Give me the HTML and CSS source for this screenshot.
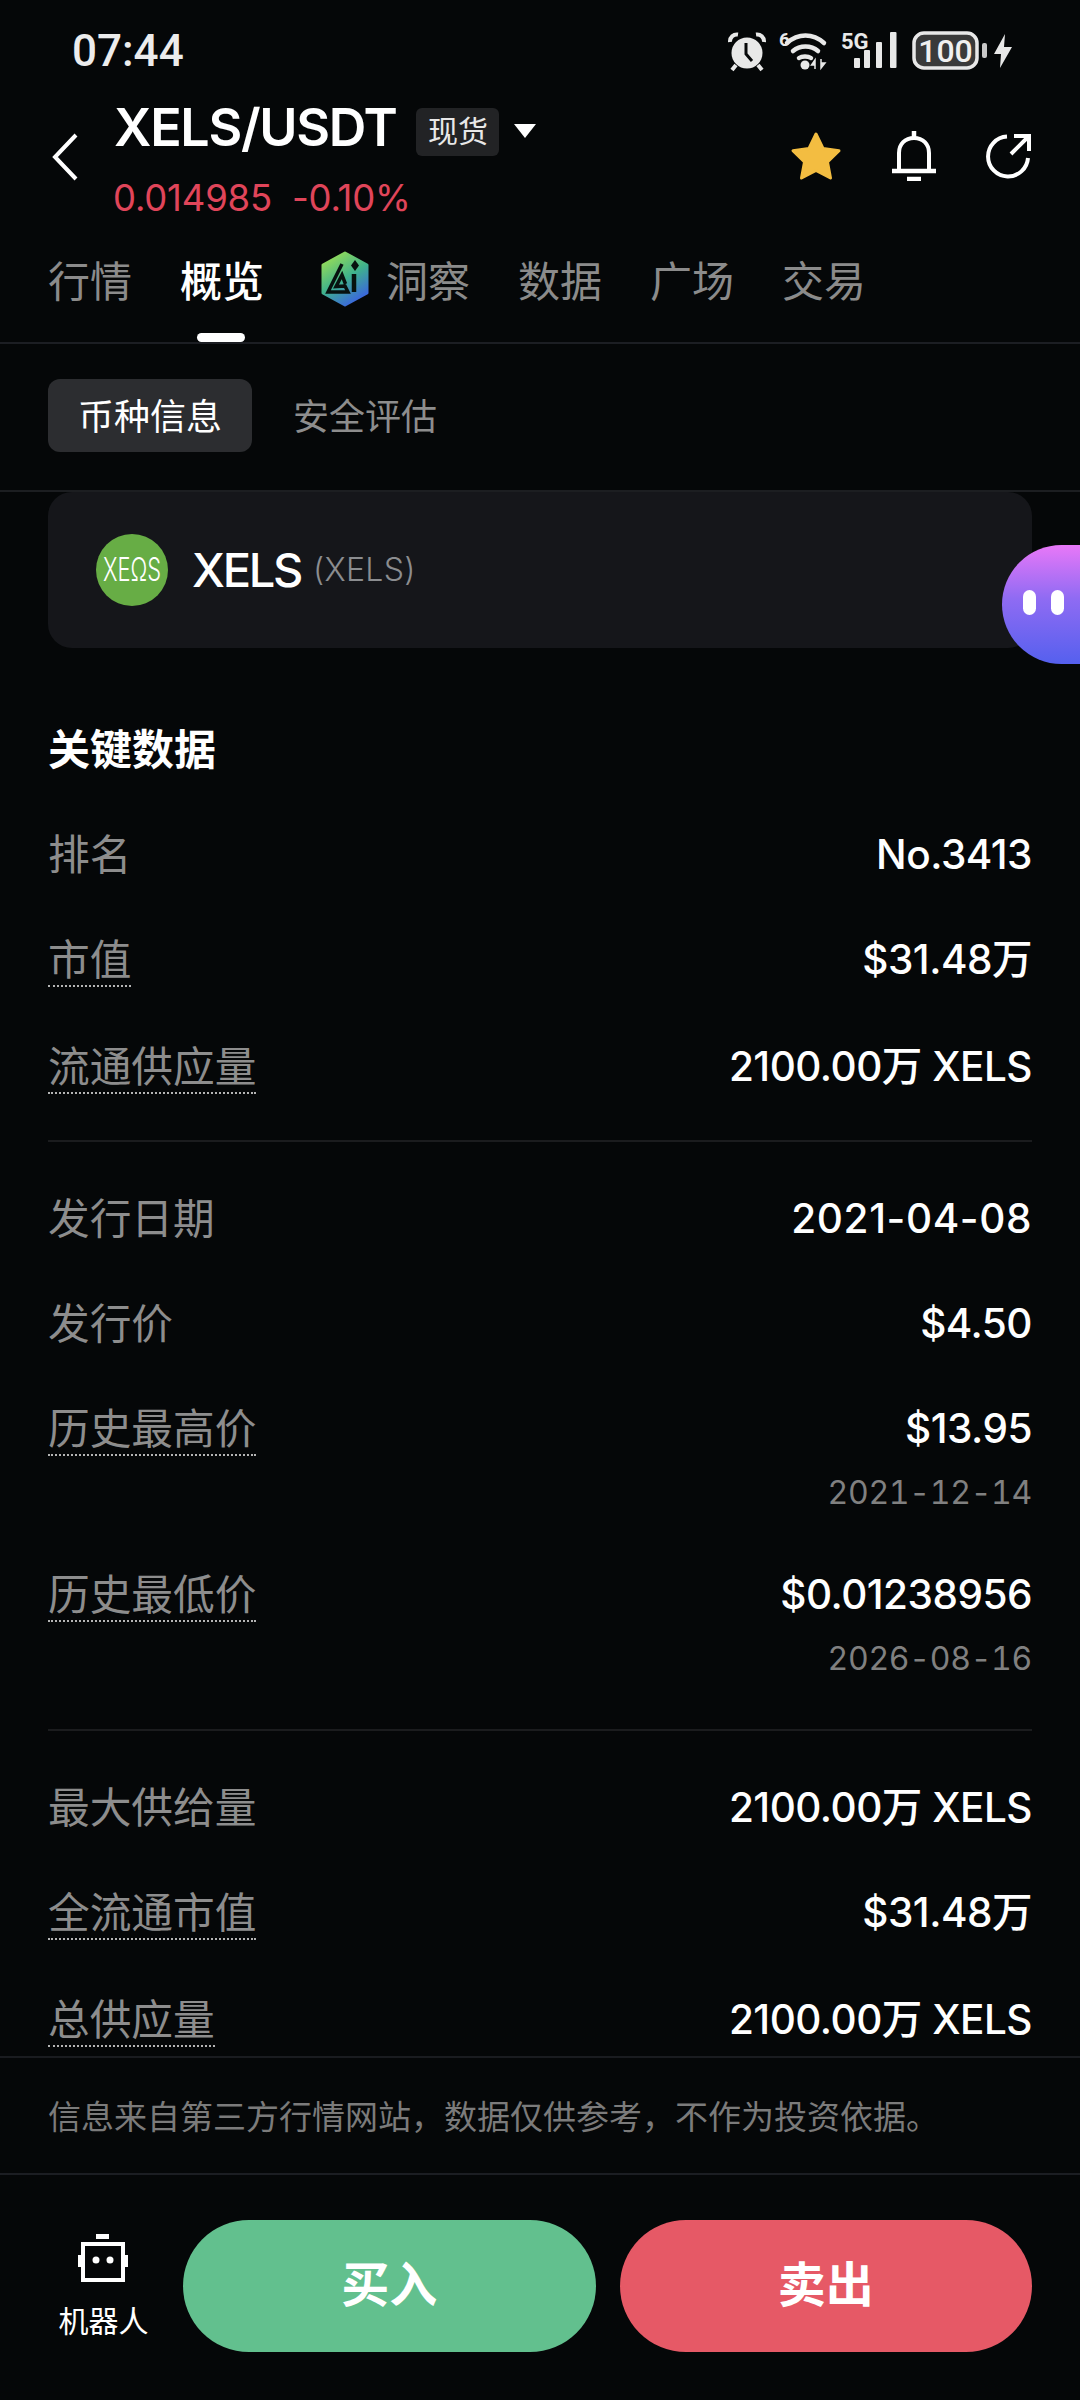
FILE: index.html
```html
<!DOCTYPE html>
<html lang="zh-CN">
<head>
<meta charset="utf-8">
<title>XELS/USDT</title>
<link rel="stylesheet" href="styles.css">
</head>
<body>
<div class="page">
  <div class="statusbar">
    <span class="clock">07:44</span>
    <div class="status-icons">
      <svg class="ic-alarm" width="38" height="40" viewBox="0 0 38 40">
        <circle cx="19" cy="21" r="15.5" fill="#e8e8e8"/>
        <path d="M2 10a7 7 0 0 1 8-7.5M36 10a7 7 0 0 0-8-7.5" fill="none" stroke="#e8e8e8" stroke-width="4"/>
        <path d="M8 33l-4 5M30 33l4 5" stroke="#e8e8e8" stroke-width="4"/>
        <path d="M18 11v11l6 7" fill="none" stroke="#07090a" stroke-width="3"/>
      </svg>
      <svg class="ic-wifi" width="52" height="42" viewBox="0 0 52 42">
        <text class="svg-six" x="2" y="16">6</text>
        <path d="M13 13c11-10 26-10 37 0M19 21c7-6 18-6 25 0M25 28c3-2 9-2 12 0" transform="translate(-3 0)" fill="none" stroke="#e8e8e8" stroke-width="4.5" stroke-linecap="round"/>
        <circle cx="28" cy="35" r="4.5" fill="#e8e8e8"/>
        <path d="M38 39V30l-3.500 5h3.500M44 29v9l4-5h-4" fill="#e8e8e8" stroke="#e8e8e8" stroke-width="1.500"/>
      </svg>
      <svg class="ic-signal" width="58" height="40" viewBox="0 0 58 40">
        <text class="svg-small" x="2" y="19">5G</text>
        <rect x="15" y="28" width="6" height="10" rx="1" fill="#e8e8e8"/>
        <rect x="25" y="20" width="6" height="18" rx="1" fill="#e8e8e8"/>
        <rect x="37" y="12" width="6" height="26" rx="1" fill="#e8e8e8"/>
        <rect x="51" y="2" width="6.500" height="36" rx="1" fill="#e8e8e8"/>
      </svg>
      <svg class="ic-battery" width="76" height="40" viewBox="0 0 76 40">
        <rect x="2" y="2" width="63" height="35" rx="10" fill="#3a3a3a" stroke="#e8e8e8" stroke-width="3.500"/>
        <text class="svg-batt" x="33.500" y="31" text-anchor="middle">100</text>
        <rect x="70" y="12" width="5" height="15" rx="2" fill="#c8c8c8"/>
      </svg>
      <svg class="ic-bolt" width="18" height="34" viewBox="0 0 18 34">
        <path d="M11 0L0 20h7l-1 14 12-21h-8z" fill="#e8e8e8"/>
      </svg>
    </div>
  </div>

  <header class="header">
    <svg class="back" width="26" height="48" viewBox="0 0 26 48">
      <path d="M24 2L3 24l21 22" fill="none" stroke="#fff" stroke-width="4"/>
    </svg>
    <div class="pair">
      <div class="pair-top">
        <span class="pair-name">XELS/USDT</span>
        <span class="badge">现货</span>
        <span class="caret"></span>
      </div>
      <div class="pair-price"><span>0.014985</span><span>-0.10%</span></div>
    </div>
    <div class="actions">
      <svg width="52" height="50" viewBox="0 0 52 50">
        <path d="M26 3l7 14.500 16 2.300-11.500 11.200L40.500 47 26 39.500 11.500 47l3-16L3 19.800l16-2.300z" fill="#f3bd41" stroke="#f3bd41" stroke-width="3" stroke-linejoin="round"/>
      </svg>
      <svg width="44" height="50" viewBox="0 0 44 50">
        <path d="M7 39V22C7 13 13 7 22 7s15 6 15 15v17" fill="none" stroke="#fff" stroke-width="4"/>
        <path d="M0 40h44M22 0v7M15 48h14" stroke="#fff" stroke-width="4.500"/>
      </svg>
      <svg width="46" height="46" viewBox="0 0 46 46">
        <path d="M21 3.500A20 20 0 1 0 42 25" fill="none" stroke="#fff" stroke-width="4"/>
        <path d="M25 21L42 4M28 3h15v15" fill="none" stroke="#fff" stroke-width="4"/>
      </svg>
    </div>
  </header>

  <nav class="tabs">
    <span class="tab">行情</span>
    <span class="tab tab-active">概览</span>
    <span class="tab tab-ai">
      <svg width="50" height="56" viewBox="0 0 50 56">
        <defs>
          <linearGradient id="aig" x1="0.2" y1="0" x2="0.75" y2="1">
            <stop offset="0" stop-color="#9adf55"/>
            <stop offset="0.5" stop-color="#3fb28c"/>
            <stop offset="1" stop-color="#3a5fe6"/>
          </linearGradient>
        </defs>
        <path d="M25 2l22 12v28L25 54 3 42V14z" fill="url(#aig)" stroke="url(#aig)" stroke-width="3" stroke-linejoin="round"/>
        <path d="M22 13L8 41h20l-3-6-9 .5L22 24l3.500 9" fill="none" stroke="#07120f" stroke-width="3.500"/>
        <path d="M34 23v18" stroke="#07120f" stroke-width="4.500"/>
        <path d="M35 9l4 5.500-4 5.500-4-5.500z" fill="#07120f"/>
      </svg>
      <span>洞察</span>
    </span>
    <span class="tab">数据</span>
    <span class="tab">广场</span>
    <span class="tab">交易</span>
  </nav>

  <div class="subtabs">
    <span class="subtab subtab-active">币种信息</span>
    <span class="subtab">安全评估</span>
  </div>

  <main class="content">
    <div class="coin-card">
      <svg class="coin-logo" width="72" height="72" viewBox="0 0 72 72">
        <circle cx="36" cy="36" r="36" fill="#67ad45"/>
        <text class="logo-text" x="36" y="47" text-anchor="middle" textLength="58" lengthAdjust="spacingAndGlyphs">XEΩS</text>
      </svg>
      <span class="coin-name">XELS</span>
      <span class="coin-symbol">(XELS)</span>
    </div>

    <section class="group">
      <h2 class="group-title">关键数据</h2>
      <div class="row"><span class="label">排名</span><div class="value">No.3413</div></div>
      <div class="row"><span class="label label-tip">市值</span><div class="value">$31.48万</div></div>
      <div class="row"><span class="label label-tip">流通供应量</span><div class="value">2100.00万 XELS</div></div>
    </section>

    <section class="group group-mid">
      <div class="row"><span class="label">发行日期</span><div class="value value-wide">2021-04-08</div></div>
      <div class="row"><span class="label">发行价</span><div class="value">$4.50</div></div>
      <div class="row"><span class="label label-tip">历史最高价</span><div class="value-stack"><div class="value">$13.95</div><div class="value-date">2021-12-14</div></div></div>
      <div class="row"><span class="label label-tip">历史最低价</span><div class="value-stack"><div class="value">$0.01238956</div><div class="value-date">2026-08-16</div></div></div>
    </section>

    <section class="group group-last">
      <div class="row"><span class="label">最大供给量</span><div class="value">2100.00万 XELS</div></div>
      <div class="row"><span class="label label-tip">全流通市值</span><div class="value">$31.48万</div></div>
      <div class="row"><span class="label label-tip">总供应量</span><div class="value">2100.00万 XELS</div></div>
    </section>
  </main>

  <div class="disclaimer">信息来自第三方行情网站，数据仅供参考，不作为投资依据。</div>

  <footer class="actionbar">
    <div class="bot">
      <svg width="52" height="48" viewBox="0 0 52 48">
        <rect x="18" y="0" width="13" height="5" fill="#fff"/>
        <rect x="5" y="10" width="40" height="36" fill="none" stroke="#fff" stroke-width="4"/>
        <rect x="0" y="21" width="3" height="12" fill="#fff"/>
        <rect x="47" y="21" width="3" height="12" fill="#fff"/>
        <circle cx="18" cy="26" r="3.500" fill="#fff"/>
        <circle cx="32" cy="26" r="3.500" fill="#fff"/>
      </svg>
      <span class="bot-label">机器人</span>
    </div>
    <button class="btn btn-buy">买入</button>
    <button class="btn btn-sell">卖出</button>
  </footer>

  <div class="assistant"><i></i><i></i></div>
</div>
</body>
</html>
```
FILE: styles.css
```css
* { box-sizing: border-box; }
html, body { margin: 0; padding: 0; background: #050708; }
body { font-family: Inter, "Noto Sans CJK SC", sans-serif; color: #fff; }
.page { position: relative; width: 1080px; height: 2400px; display: flex; flex-direction: column; overflow: hidden; background: #050708; }

.statusbar { height: 92px; flex: none; display: flex; justify-content: space-between; padding: 30px 68px 0 72px; }
.clock { font-family: Roboto, sans-serif; font-size: 44px; font-weight: 500; line-height: 42px; color: #ececec; }
.status-icons { display: flex; align-items: flex-start; }
.status-icons svg { overflow: visible; }
.ic-alarm { margin-top: 2px; }
.ic-wifi { margin-left: 11px; }
.ic-signal { margin-left: 10px; }
.ic-battery { margin-left: 15px; margin-top: 1px; }
.ic-bolt { margin-left: 6px; margin-top: 4px; }
.svg-six { font-family: Roboto, sans-serif; font-size: 19px; font-weight: 700; fill: #e8e8e8; }
.svg-small { font-family: Roboto, sans-serif; font-size: 22px; font-weight: 700; fill: #e8e8e8; }
.svg-batt { font-family: Roboto, sans-serif; font-size: 32px; font-weight: 500; fill: #f0f0f0; }

.header { height: 125px; flex: none; display: flex; position: relative; padding: 41px 48px 0 52px; }
.back { flex: none; }
.pair { margin-top: -30px; margin-left: 35px; }
.pair-top { display: flex; align-items: center; height: 50px; }
.pair-name { font-size: 52px; font-weight: 600; line-height: 50px; letter-spacing: -1.3px; margin-left: 1px; }
.badge { margin-left: 20px; margin-top: 8px; width: 83px; height: 48px; background: #222325; border-radius: 6px; text-align: center; font-size: 30px; line-height: 46px; color: #e8e8e8; }
.caret { margin-left: 15px; margin-top: 6px; width: 0; height: 0; border-left: 11px solid transparent; border-right: 11px solid transparent; border-top: 14px solid #fff; }
.pair-price { margin-top: 25px; display: flex; gap: 20px; font-size: 36.500px; line-height: 40px; letter-spacing: -0.2px; color: #e0455a; }
.actions { margin-left: auto; display: flex; align-items: center; gap: 50px; height: 50px; margin-top: -2px; }

.tabs { height: 127px; flex: none; display: flex; align-items: flex-start; padding: 35px 0 0 48px; border-bottom: 2px solid #1c1e23; }
.tab { font-size: 42px; line-height: 60px; color: #8b8b8b; margin-right: 48px; position: relative; height: 90px; }
.tab-active { color: #fff; font-weight: 500; }
.tab-active::after { content: ""; position: absolute; left: 17px; bottom: 0; width: 48px; height: 9px; border-radius: 5px; background: #fff; }
.tab-ai { display: flex; align-items: flex-start; gap: 16px; margin-left: 8px; }
.tab-ai svg { margin-top: -1px; }

.subtabs { height: 148px; flex: none; display: flex; align-items: flex-start; gap: 41px; padding: 35px 0 0 48px; border-bottom: 2px solid #1c1e21; }
.subtab { font-size: 36px; line-height: 77px; height: 73px; color: #8d8d8d; }
.subtab-active { padding: 0 30px; border-radius: 12px; background: #2c2d30; color: #fff; }

.content { flex: 1; min-height: 0; overflow: hidden; padding: 0 48px; }
.coin-card { height: 156px; border-radius: 24px; background: #15161a; display: flex; align-items: center; padding-left: 48px; }
.coin-logo { flex: none; overflow: visible; }
.logo-text { font-family: Inter, sans-serif; font-size: 32px; font-weight: 300; fill: #fff; }
.coin-name { margin-left: 24px; font-size: 47px; font-weight: 500; line-height: 50px; letter-spacing: -2.300px; }
.coin-symbol { margin-left: 12px; font-size: 32px; font-weight: 300; line-height: 50px; letter-spacing: 0.3px; color: #8b8d90; }

.group { display: flex; flex-direction: column; gap: 55px; padding: 52px 0 46px; border-bottom: 2px solid #1b1c1e; }
.group:first-of-type { padding-top: 77px; }
.group-mid { padding-bottom: 48px; }
.group-last { border-bottom: 0; }
.group-title { margin: 0; font-size: 42px; line-height: 50px; font-weight: 600; }
.row { display: flex; justify-content: space-between; align-items: flex-start; }
.label { font-size: 41.700px; line-height: 50px; color: #8d8d8d; }
.label-tip { border-bottom: 2px dotted #b4b4b4; }
.value { font-size: 40.500px; line-height: 50px; font-weight: 500; text-align: right; letter-spacing: -0.5px; white-space: nowrap; }
.value-wide { letter-spacing: 0.6px; }
.value-stack { text-align: right; }
.value-date { margin-top: 17px; font-size: 32px; line-height: 44px; font-weight: 400; letter-spacing: -0.3px; color: #808080; font-variant-numeric: tabular-nums; }

.disclaimer { flex: none; height: 119px; padding: 3px 0 0 48px; border-top: 2px solid #1a1c20; border-bottom: 2px solid #1c1e23; font-size: 33px; line-height: 112px; color: #7b7b7b; }

.actionbar { flex: none; height: 225px; display: flex; align-items: flex-start; gap: 24px; padding: 45px 48px 0 48px; }
.bot { flex: none; width: 111px; display: flex; flex-direction: column; align-items: center; margin-top: 14px; }
.bot-label { margin-top: 19px; font-size: 30px; line-height: 40px; color: #fff; white-space: nowrap; }
.btn { flex: 1; height: 132px; border: 0; border-radius: 66px; font-family: inherit; font-size: 48px; font-weight: 700; color: #fff; padding: 0 0 10px; }
.btn-buy { background: #62c08e; }
.btn-sell { background: #e65966; }

.assistant { position: absolute; left: 1002px; top: 545px; width: 78px; height: 119px; padding-top: 45px; padding-left: 21px; display: flex; align-items: flex-start; gap: 15px; border-radius: 60px 0 0 60px; background: linear-gradient(180deg, #e878f8 0%, #8f6bf3 45%, #5560ee 100%); }
.assistant i { display: block; width: 13px; height: 25px; border-radius: 7px; background: #fff; }
```
